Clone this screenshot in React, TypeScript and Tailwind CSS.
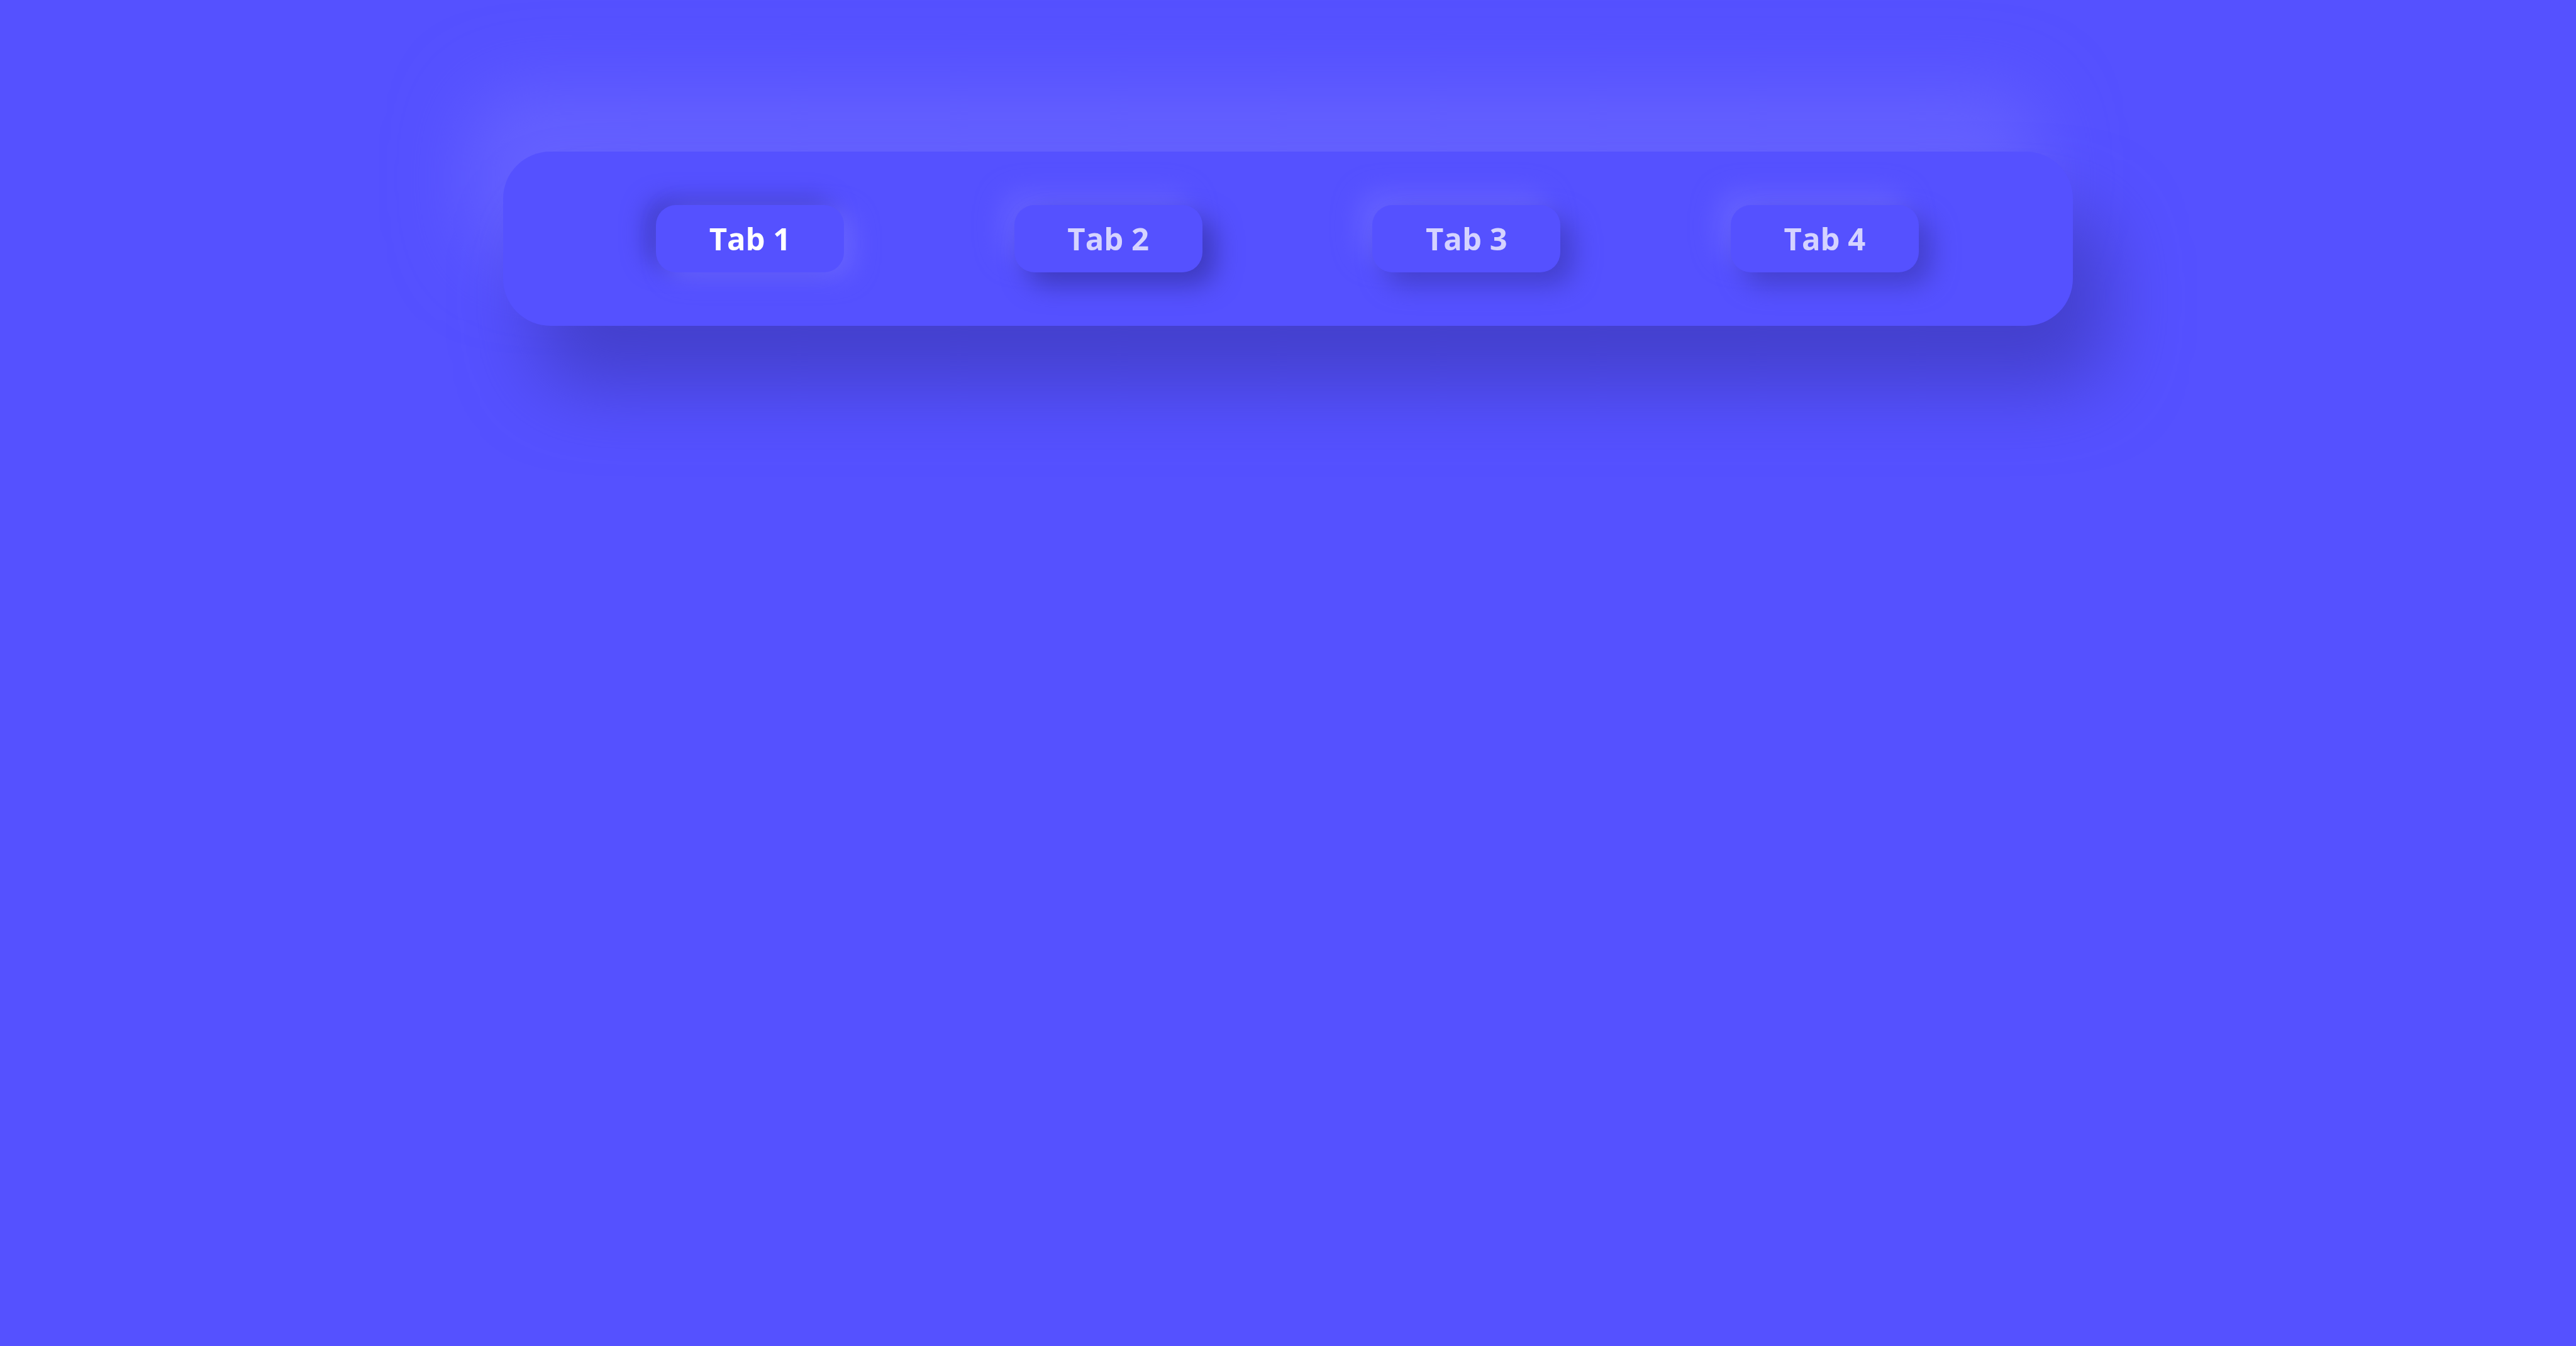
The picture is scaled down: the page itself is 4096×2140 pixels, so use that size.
import { useState } from "react";

const tabs = ["Tab 1", "Tab 2", "Tab 3", "Tab 4"];

const pressed =
  "text-white shadow-[17px_9px_36px_#6662ff,-17px_-9px_36px_#433fcc]";
const raised =
  "text-[#d5d3ff] shadow-[20px_20px_40px_#4440ce,-20px_-20px_40px_#6662ff]";
const raisedStrong =
  "text-[#d5d3ff] shadow-[20px_20px_40px_#3e3abf,-20px_-20px_40px_#6460ff]";

export default function App() {
  const [active, setActive] = useState(0);
  const [highlighted, setHighlighted] = useState(1);

  return (
    <main className="flex min-h-screen flex-col items-center bg-[#5551ff] pt-[241px] font-['Open_Sans','Noto_Sans',sans-serif]">
      <div
        role="tablist"
        className="flex w-full max-w-[2496px] items-center justify-between rounded-[75px] bg-[#5551ff] py-[85px] pr-[245px] pl-[243px] shadow-[53px_96px_120px_#4440cd,-53px_-96px_120px_#6662ff]"
      >
        {tabs.map((label, i) => (
          <button
            key={label}
            type="button"
            role="tab"
            aria-selected={i === active}
            onClick={() => setActive(i)}
            onMouseEnter={() => setHighlighted(i)}
            className={`h-[107px] w-[299px] cursor-pointer rounded-[32px] bg-[#5551ff] text-[49px] leading-[67px] font-bold ${
              i === active ? pressed : i === highlighted ? raisedStrong : raised
            }`}
          >
            {label}
          </button>
        ))}
      </div>
    </main>
  );
}
